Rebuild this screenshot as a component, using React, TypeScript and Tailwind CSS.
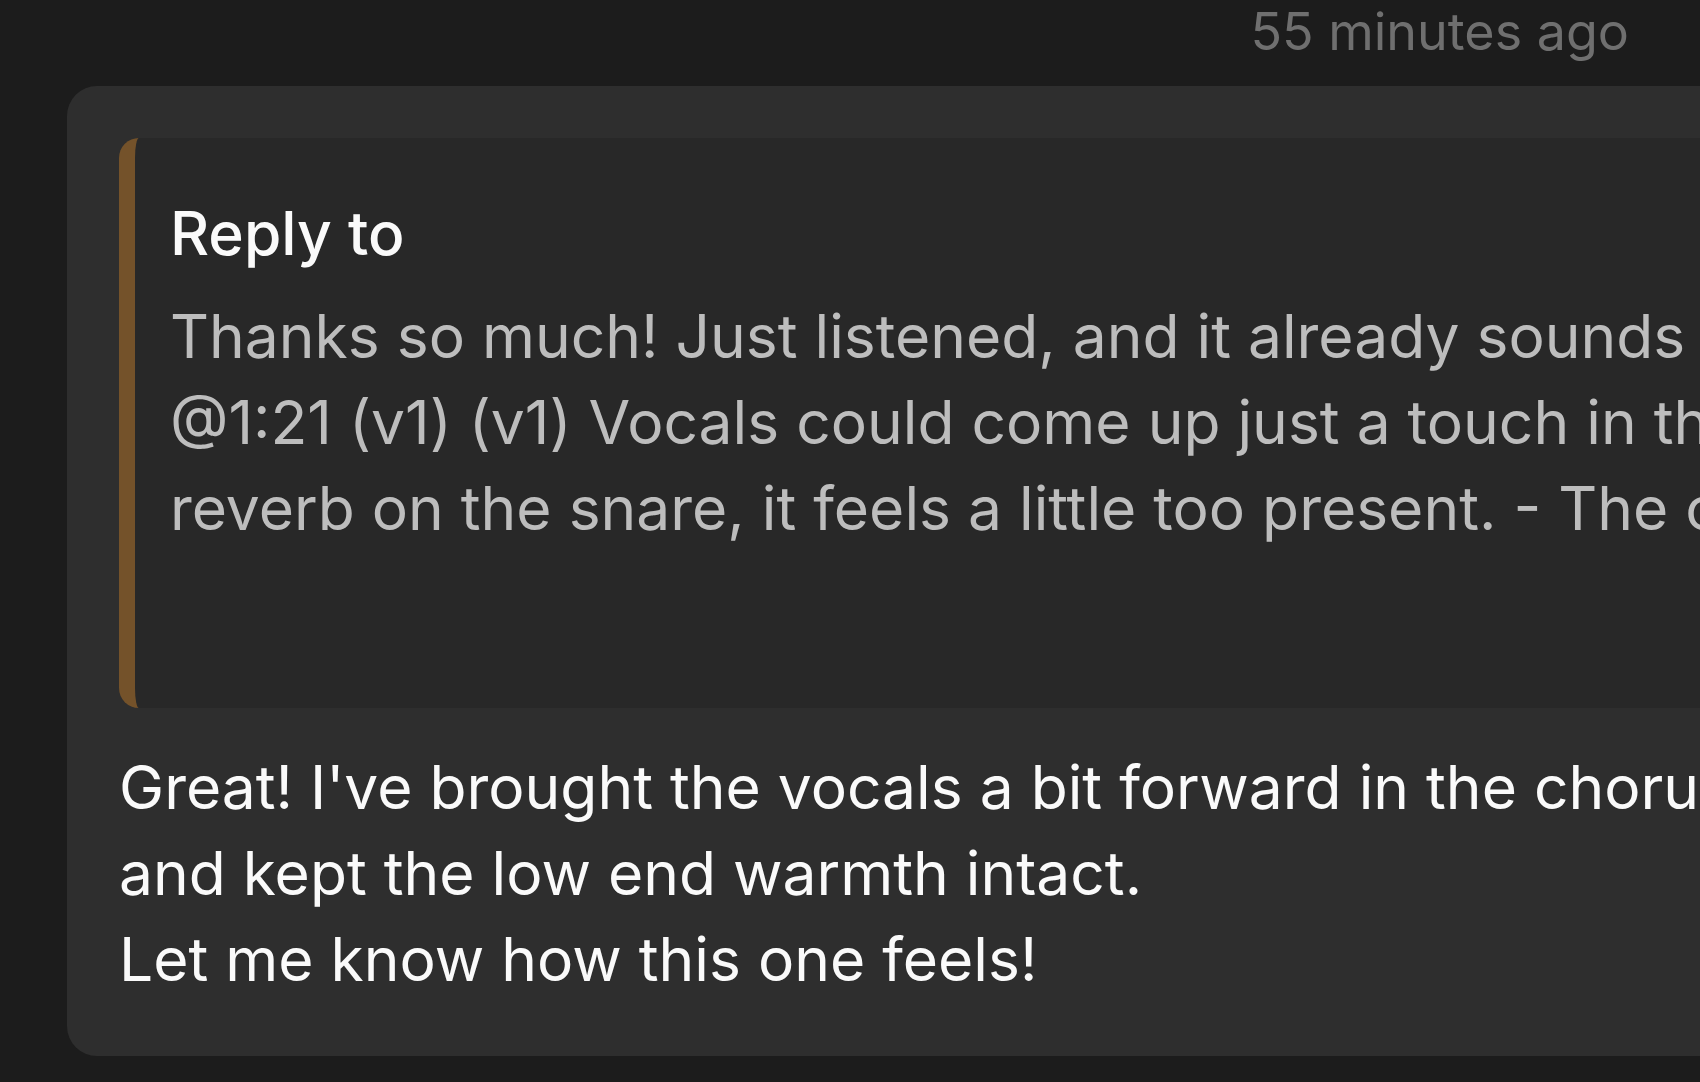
import React from 'react';

const quoteLines = [
  'Thanks so much! Just listened, and it already sounds great.',
  '@1:21 (v1) (v1) Vocals could come up just a touch in the chorus.',
  'reverb on the snare, it feels a little too present. - The overall mix',
];

const bodyLines = [
  "Great! I've brought the vocals a bit forward in the chorus, softened the snare reverb,",
  'and kept the low end warmth intact.',
  'Let me know how this one feels!',
];

const App: React.FC = () => {
  return (
    <div
      className="w-[1700px] h-[1082px] overflow-hidden bg-[#1c1c1c]"
      style={{ fontFamily: 'Inter, "Noto Sans", sans-serif' }}
    >
      <div className="flex justify-end pr-[71px] pt-[2px]">
        <span className="text-[52px] leading-[60px] text-[#6f6f6f]">55 minutes ago</span>
      </div>

      <div className="ml-[67px] mt-[24px] w-[2000px] rounded-[30px] bg-[#2e2e2e] px-[52px] pt-[52px] pb-[54px]">
        {/* quoted message */}
        <div className="rounded-[20px] border-l-[16px] border-[#74522a] bg-[#282828] pl-[35px] pt-[52px] pb-[157px]">
          <div className="text-[60.5px] leading-[86px] font-medium text-[#fafafa]">Reply to</div>
          <div className="mt-[17px] text-[60.5px] leading-[86px] text-[#bdbdbd]">
            {quoteLines.map((line) => (
              <div key={line} className="whitespace-nowrap">{line}</div>
            ))}
          </div>
        </div>

        <div className="mt-[36px] text-[60.5px] leading-[86px] text-[#fafafa]">
          {bodyLines.map((line) => (
            <div key={line} className="whitespace-nowrap">{line}</div>
          ))}
        </div>
      </div>
    </div>
  );
};

export default App;
